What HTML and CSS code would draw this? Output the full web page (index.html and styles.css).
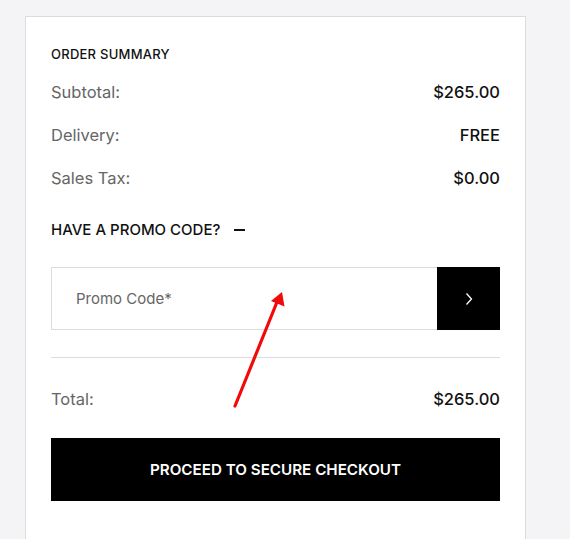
FILE: index.html
```html
<!DOCTYPE html>
<html lang="en">
<head>
    <meta charset="UTF-8">
    <title>Order Summary</title>
    <link rel="stylesheet" href="styles.css">
</head>
<body>
    <div class="summary">
        <h2 class="summary-title">ORDER SUMMARY</h2>
        <div class="row">
            <span class="label">Subtotal:</span>
            <span class="value">$265.00</span>
        </div>
        <div class="row">
            <span class="label">Delivery:</span>
            <span class="value">FREE</span>
        </div>
        <div class="row">
            <span class="label">Sales Tax:</span>
            <span class="value">$0.00</span>
        </div>
        <div class="promo-toggle">
            HAVE A PROMO CODE?
            <span class="minus"></span>
        </div>
        <form class="promo-form">
            <input type="text" class="promo-input" placeholder="Promo Code*">
            <button type="button" class="promo-btn">
                <svg width="8" height="14" viewBox="0 0 8 14">
                    <path d="M1.5 1.5 L6.5 7 L1.5 12.5" fill="none" stroke="#fff" stroke-width="1.3"/>
                </svg>
            </button>
        </form>
        <hr class="divider">
        <div class="row total">
            <span class="label">Total:</span>
            <span class="value">$265.00</span>
        </div>
        <button type="button" class="checkout">PROCEED TO SECURE CHECKOUT</button>
    </div>
    <!-- red annotation arrow -->
    <svg class="annotation" width="570" height="539" viewBox="0 0 570 539">
        <line x1="235" y1="406" x2="277" y2="302" stroke="#f00a0a" stroke-width="3.2" stroke-linecap="round"/>
        <polygon points="282,292 284.5,306.5 271,301" fill="#f00a0a"/>
    </svg>
</body>
</html>
```

FILE: styles.css
```css
body {
    margin: 0;
    background-color: #f4f4f6;
    font-family: Inter, "Noto Sans", Arial, sans-serif;
    height: 539px;
    overflow: hidden;
}
.summary {
    box-sizing: border-box;
    width: 501px;
    min-height: 540px;
    margin: 16px 0 0 25px;
    padding: 27px 25px 0 25px;
    background-color: #fff;
    border: 1px solid #dcdcdc;
    border-bottom: none;
}
.summary-title {
    margin: 0 0 16px;
    font-size: 13px;
    font-weight: 500;
    line-height: 20px;
    color: #111;
    letter-spacing: 0.25px;
}
.row {
    display: flex;
    justify-content: space-between;
    font-size: 16.5px;
    line-height: 24px;
    margin-bottom: 19px;
}
.label {
    color: #666;
}
.value {
    color: #111;
    font-weight: 500;
}
.promo-toggle {
    display: flex;
    align-items: center;
    margin-top: 29px;
    font-size: 15px;
    font-weight: 500;
    line-height: 22px;
    color: #111;
}
.minus {
    display: inline-block;
    width: 11px;
    height: 1.5px;
    margin-left: 14px;
    background-color: #111;
}
.promo-form {
    display: flex;
    margin-top: 26px;
    height: 63px;
}
.promo-input {
    flex: 1;
    box-sizing: border-box;
    height: 63px;
    padding: 0 24px;
    border: 1px solid #dcdcdc;
    border-right: none;
    font-family: inherit;
    font-size: 15px;
    color: #111;
    outline: none;
}
.promo-input::placeholder {
    color: #666;
}
.promo-btn {
    width: 63px;
    height: 63px;
    padding: 0;
    border: none;
    background-color: #000;
    display: flex;
    align-items: center;
    justify-content: center;
    cursor: pointer;
}
.divider {
    margin: 27px 0 29px;
    border: none;
    border-top: 1px solid #dcdcdc;
}
.row.total {
    margin-bottom: 27px;
}
.checkout {
    width: 100%;
    height: 63px;
    border: none;
    background-color: #000;
    color: #fff;
    font-family: inherit;
    font-size: 15.2px;
    font-weight: 600;
    cursor: pointer;
}
.annotation {
    position: absolute;
    top: 0;
    left: 0;
    pointer-events: none;
}
```
